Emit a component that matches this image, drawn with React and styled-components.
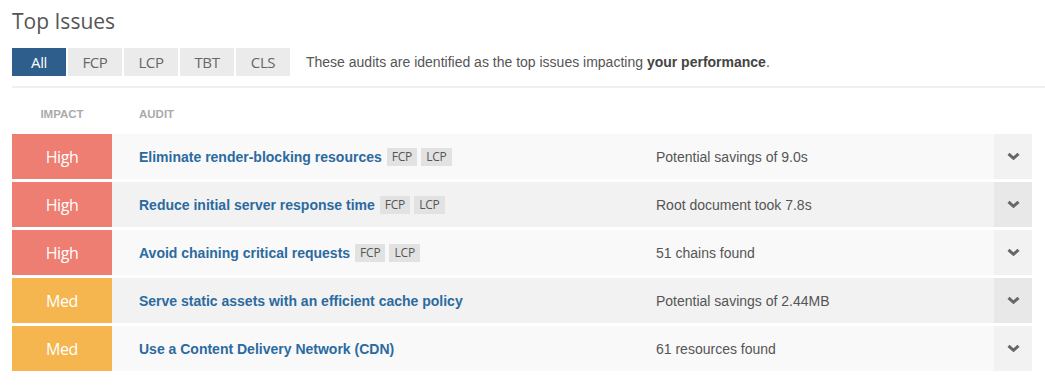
import styled, { createGlobalStyle } from "styled-components";

const GlobalStyle = createGlobalStyle`
  body {
    margin: 0;
    background: #fff;
    font-family: "Liberation Sans", Arial, sans-serif;
  }
`;

const tabs = [ "All", "FCP", "LCP", "TBT", "CLS" ];

const issues = [
	{ impact: "High", title: "Eliminate render-blocking resources", tags: [ "FCP", "LCP" ], details: "Potential savings of 9.0s" },
	{ impact: "High", title: "Reduce initial server response time", tags: [ "FCP", "LCP" ], details: "Root document took 7.8s" },
	{ impact: "High", title: "Avoid chaining critical requests", tags: [ "FCP", "LCP" ], details: "51 chains found" },
	{ impact: "Med", title: "Serve static assets with an efficient cache policy", tags: [], details: "Potential savings of 2.44MB" },
	{ impact: "Med", title: "Use a Content Delivery Network (CDN)", tags: [], details: "61 resources found" },
];

const Chevron = () => (
	<svg width="13" height="9" viewBox="0 0 13 9">
		<path d="M1.5 1.8 L6.5 6.3 L11.5 1.8" fill="none" stroke="#666" strokeWidth="3" />
	</svg>
);

export default function App() {

	return (
		<Page>
			<GlobalStyle />
			<Page.Title>Top Issues</Page.Title>
			<Page.Toolbar>
				<Page.Tabs>
					{ tabs.map( ( t, i ) => (
						<Page.Tab key={ t } active={ i === 0 }>{ t }</Page.Tab>
					) ) }
				</Page.Tabs>
				<Page.Note>
					These audits are identified as the top issues impacting <b>your performance</b>.
				</Page.Note>
			</Page.Toolbar>
			<Page.Divider />
			<Table>
				<Table.Head>
					<Table.HeadCell center>Impact</Table.HeadCell>
					<Table.HeadCell>Audit</Table.HeadCell>
				</Table.Head>
				{ issues.map( ( issue, i ) => (
					<Table.Row key={ issue.title } even={ i % 2 === 1 }>
						<Table.Impact level={ issue.impact }>{ issue.impact }</Table.Impact>
						<Table.Audit>
							<Table.AuditTitle>{ issue.title }</Table.AuditTitle>
							{ issue.tags.map( tag => <Table.Tag key={ tag }>{ tag }</Table.Tag> ) }
						</Table.Audit>
						<Table.Details>{ issue.details }</Table.Details>
						<Table.Toggle even={ i % 2 === 1 }><Chevron /></Table.Toggle>
					</Table.Row>
				) ) }
			</Table>
		</Page>
	);
}

const Page = styled.div`
  padding: 8px 0 0 12px;
`;

Page.Title = styled.h2`
  margin: 0;
  font-family: "Open Sans", sans-serif;
  font-size: 21px;
  font-weight: 400;
  line-height: 26px;
  color: #555;
`;

Page.Toolbar = styled.div`
  display: flex;
  align-items: center;
  margin-top: 14px;
`;

Page.Tabs = styled.div`
  display: flex;
  gap: 2px;
`;

Page.Tab = styled.div`
  width: 54px;
  height: 28px;
  display: flex;
  align-items: center;
  justify-content: center;
  font-family: "Open Sans", sans-serif;
  font-size: 15px;
  letter-spacing: -0.4px;
  color: ${ ( { active } ) => active ? "#fff" : "#666" };
  background: ${ ( { active } ) => active ? "#2e5e8c" : "#ebebeb" };
`;

Page.Note = styled.div`
  margin-left: 16px;
  font-size: 14px;
  color: #555;

  b {
    color: #444;
  }
`;

Page.Divider = styled.div`
  height: 2px;
  background: #efefef;
  margin-top: 10px;
`;

const Table = styled.div`
  width: 1020px;
  padding-top: 20px;
  display: flex;
  flex-direction: column;
  gap: 3px;
`;

Table.Head = styled.div`
  display: grid;
  grid-template-columns: 100px 1fr;
  height: 23px;
  align-items: start;
`;

Table.HeadCell = styled.div`
  font-size: 11.5px;
  font-weight: 700;
  text-transform: uppercase;
  color: #aaa;
  text-align: ${ ( { center } ) => center ? "center" : "left" };
  padding-left: ${ ( { center } ) => center ? "0" : "27px" };
`;

Table.Row = styled.div`
  display: grid;
  grid-template-columns: 100px 517px 1fr 38px;
  height: 45px;
  background: ${ ( { even } ) => even ? "#f2f2f2" : "#f9f9f9" };
`;

Table.Impact = styled.div`
  display: flex;
  align-items: center;
  justify-content: center;
  font-family: "Open Sans", sans-serif;
  font-size: 16px;
  letter-spacing: -0.4px;
  color: #fff;
  background: ${ ( { level } ) => level === "High" ? "#ee7d72" : "#f5b54f" };
`;

Table.Audit = styled.div`
  display: flex;
  align-items: center;
  gap: 4px;
  padding-left: 27px;
`;

Table.AuditTitle = styled.span`
  font-size: 14px;
  font-weight: 700;
  color: #2b6aa0;
  margin-right: 1px;
`;

Table.Tag = styled.span`
  height: 18px;
  padding: 0 5px;
  display: inline-flex;
  align-items: center;
  font-family: "Open Sans", sans-serif;
  font-size: 12px;
  letter-spacing: -0.2px;
  color: #555;
  background: #e2e2e2;
`;

Table.Details = styled.div`
  display: flex;
  align-items: center;
  padding-left: 27px;
  font-size: 14px;
  color: #555;
`;

Table.Toggle = styled.div`
  display: flex;
  align-items: center;
  justify-content: center;
  background: ${ ( { even } ) => even ? "#e8e8e8" : "#f2f2f2" };
`;
